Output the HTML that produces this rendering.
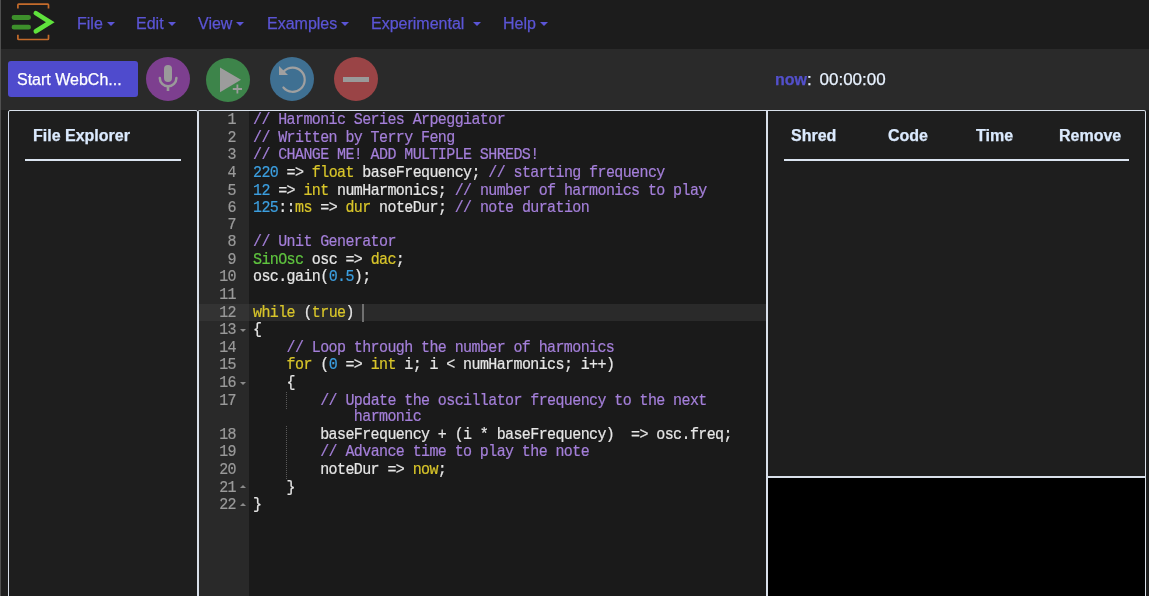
<!DOCTYPE html>
<html><head><meta charset="utf-8">
<style>
*{box-sizing:border-box;margin:0;padding:0}
html,body{width:1149px;height:596px;overflow:hidden;background:#2a2a2a;font-family:"Liberation Sans",sans-serif}
.abs{position:absolute}
.menu,#start,.tx,.hd{-webkit-text-stroke:0.25px currentColor}
#strip{left:0;top:0;width:1px;height:596px;background:#505050}
#nav{left:1px;top:0;width:1148px;height:49px;background:#1c1c1c}
.menu{position:absolute;top:15px;font-size:16px;color:#5b55d6;white-space:nowrap}
.caret{display:inline-block;width:0;height:0;border-left:4px solid transparent;border-right:4px solid transparent;border-top:4px solid #5b55d6;vertical-align:middle;margin-left:4px;position:relative;top:-1px}
#tb{left:1px;top:49px;width:1148px;height:61px;background:#2a2a2a}
#start{left:8px;top:61px;width:130px;height:36px;background:#4f4bcd;border-radius:3px;color:#fff;font-size:16px;line-height:38px;padding-left:9px;white-space:nowrap}
.circ{position:absolute;border-radius:50%}
#fe{left:8px;top:110px;width:190px;height:500px;background:#1e1e1e;border:1px solid #d9e0ea;border-radius:2px 2px 0 0}
#ed{left:198px;top:110px;width:569px;height:500px;background:#1a1a1a;border-top:1px solid #d9e0ea;border-left:1px solid #d9e0ea;border-radius:2px 0 0 0}
#gut{left:199px;top:111px;width:50px;height:500px;background:#292929}
#rp{left:766px;top:110px;width:380px;height:368px;background:#1e1e1e;border:1px solid #d9e0ea;border-left:2px solid #d9e0ea;border-bottom:2px solid #d9e0ea;border-radius:0 2px 0 0}
#rpb{left:766px;top:478px;width:380px;height:130px;background:#000;border-left:2px solid #d9e0ea;border-right:1px solid #d9e0ea}
.hd{position:absolute;top:127px;font-size:16px;font-weight:bold;color:#dbeafe;white-space:nowrap}
.ul{position:absolute;height:2px;background:#dbe4f0}
.code{position:absolute;left:253px;top:112.1px;font-family:"Liberation Mono",monospace;font-size:15px;letter-spacing:-0.6px;line-height:15.909px;transform:scaleY(1.1);transform-origin:0 0;color:#e6e6e6;will-change:transform;-webkit-text-stroke:0.2px currentColor;white-space:pre}
.ln{position:absolute;left:199px;top:112.1px;width:37px;text-align:right;font-family:"Liberation Mono",monospace;font-size:15px;letter-spacing:-0.6px;line-height:15.909px;transform:scaleY(1.1);transform-origin:0 0;color:#9a9a9a;will-change:transform;-webkit-text-stroke:0.2px currentColor;white-space:pre}
.fd{position:absolute;left:240px;width:0;height:0;border-left:3px solid transparent;border-right:3px solid transparent}.dn{border-top:3px solid #8a8a8a}.up{border-bottom:3px solid #8a8a8a}
.c{color:#a47fd9}.n{color:#3c9fe0}.k{color:#d8c52a}.g{color:#5fc43f}
</style></head><body><div id="root" style="position:absolute;left:0;top:0;width:1149px;height:596px;will-change:transform">
<div id="strip" class="abs"></div>
<div id="nav" class="abs"></div>
<svg class="abs" style="left:0;top:0" width="60" height="48" viewBox="0 0 60 48">
 <path d="M17.9 8.6V4.9Q17.9 4.1 18.7 4.1H47.7Q48.5 4.1 48.5 4.9V8.6 M17.9 34.8V38.7Q17.9 39.5 18.7 39.5H47.7Q48.5 39.5 48.5 38.7V34.8" fill="none" stroke="#c46b2b" stroke-width="1.7"/>
 <path d="M14 17.5H28.6 M14 27.2H28.6" stroke="#3d8f2b" stroke-width="4.8" stroke-linecap="round"/>
 <path d="M35.8 13.1L50.3 22.2L35.8 31.3" fill="none" stroke="#5fe23c" stroke-width="4.6" stroke-linecap="round" stroke-linejoin="miter" stroke-miterlimit="10"/>
</svg>
<div class="menu" style="left:77px">File<span class="caret"></span></div>
<div class="menu" style="left:136px">Edit<span class="caret"></span></div>
<div class="menu" style="left:198px">View<span class="caret"></span></div>
<div class="menu" style="left:267px">Examples<span class="caret"></span></div>
<div class="menu" style="left:371px">Experimental <span class="caret"></span></div>
<div class="menu" style="left:503px">Help<span class="caret"></span></div>

<div id="start" class="abs">Start WebCh...</div>
<div class="circ" style="left:146px;top:57px;width:44px;height:44px;background:#7d3f8f"></div>
<svg class="abs" style="left:146px;top:57px" width="44" height="44" viewBox="0 0 44 44">
 <rect x="18" y="7.9" width="8" height="17" rx="4" fill="#9a9a9a"/>
 <path d="M13.8 21a8.3 8.3 0 0 0 16.6 0" fill="none" stroke="#9a9a9a" stroke-width="2.5" stroke-linecap="round"/>
 <path d="M22 29V34" stroke="#9a9a9a" stroke-width="2.6"/>
</svg>
<div class="circ" style="left:206px;top:58px;width:44px;height:44px;background:#3d844a"></div>
<svg class="abs" style="left:206px;top:58px" width="44" height="44" viewBox="0 0 44 44">
 <path d="M14 9.4L35 21.8L14 34.2Z" fill="#9c9c9c"/>
 <path d="M26.8 31H36 M31.4 26.4V35.6" stroke="#9c9c9c" stroke-width="1.8"/>
</svg>
<div class="circ" style="left:270px;top:57px;width:44px;height:44px;background:#3f7092"></div>
<svg class="abs" style="left:270px;top:57px" width="44" height="44" viewBox="0 0 44 44">
 <path d="M14.1 14.1A12.1 12.1 0 1 1 13.4 30.5" fill="none" stroke="#a0a0a0" stroke-width="2.2" stroke-linecap="round"/>
 <path d="M9 9L9 18L18 18Z" fill="#a0a0a0"/>
</svg>
<div class="circ" style="left:334px;top:57px;width:44px;height:44px;background:#9a4446"></div>
<div class="abs" style="left:343px;top:77px;width:26px;height:4.8px;background:#9a9a9a"></div>

<div class="abs tx" style="left:775px;top:70px;font-size:17px;white-space:nowrap;color:#e8f2ff"><b style="color:#5350cc;font-size:16px">now</b>:</div>
<div class="abs tx" style="left:819.5px;top:70px;font-size:17px;white-space:nowrap;color:#e8f2ff">00:00:00</div>

<div class="abs" style="left:1px;top:110px;width:1148px;height:486px;background:#1e1e1e"></div>
<div id="fe" class="abs"></div>
<div class="hd" style="left:33px">File Explorer</div>
<div class="ul" style="left:25px;top:159px;width:156px"></div>

<div id="ed" class="abs"></div>
<div id="gut" class="abs"></div>
<div class="abs" style="left:199px;top:304px;width:50px;height:17px;background:#333"></div>
<div class="abs" style="left:249px;top:304px;width:517px;height:17px;background:#2a2a2a"></div>
<div class="abs" style="left:362px;top:304px;width:2px;height:18px;background:#707070"></div>

<div class="abs" style="left:286px;top:392px;width:1px;height:17px;background:repeating-linear-gradient(to bottom,#5a5a5a 0 1px,transparent 1px 2px)"></div>
<div class="abs" style="left:286px;top:426px;width:1px;height:53px;background:repeating-linear-gradient(to bottom,#5a5a5a 0 1px,transparent 1px 2px)"></div>
<div class="fd dn" style="top:329px"></div>
<div class="fd dn" style="top:381.5px"></div>
<div class="fd up" style="top:485px"></div>
<div class="fd up" style="top:502.5px"></div>
<div class="ln">1
2
3
4
5
6
7
8
9
10
11
12
13
14
15
16
17

18
19
20
21
22</div>
<div class="code"><span class="c">// Harmonic Series Arpeggiator</span>
<span class="c">// Written by Terry Feng</span>
<span class="c">// CHANGE ME! ADD MULTIPLE SHREDS!</span>
<span class="n">220</span> =&gt; <span class="k">float</span> baseFrequency; <span class="c">// starting frequency</span>
<span class="n">12</span> =&gt; <span class="k">int</span> numHarmonics; <span class="c">// number of harmonics to play</span>
<span class="n">125</span>::<span class="k">ms</span> =&gt; <span class="k">dur</span> noteDur; <span class="c">// note duration</span>

<span class="c">// Unit Generator</span>
<span class="g">SinOsc</span> osc =&gt; <span class="k">dac</span>;
osc.gain(<span class="n">0.5</span>);

<span class="k">while</span> (<span class="k">true</span>)
{
    <span class="c">// Loop through the number of harmonics</span>
    <span class="k">for</span> (<span class="n">0</span> =&gt; <span class="k">int</span> i; i &lt; numHarmonics; i++)
    {
        <span class="c">// Update the oscillator frequency to the next</span>
            <span class="c">harmonic</span>
        baseFrequency + (i * baseFrequency)  =&gt; osc.freq;
        <span class="c">// Advance time to play the note</span>
        noteDur =&gt; <span class="k">now</span>;
    }
}</div>

<div id="rp" class="abs"></div>
<div id="rpb" class="abs"></div>
<div class="hd" style="left:791px">Shred</div>
<div class="hd" style="left:888px">Code</div>
<div class="hd" style="left:976px">Time</div>
<div class="hd" style="left:1059px">Remove</div>
<div class="ul" style="left:784px;top:159px;width:345px"></div>
</div></body></html>
